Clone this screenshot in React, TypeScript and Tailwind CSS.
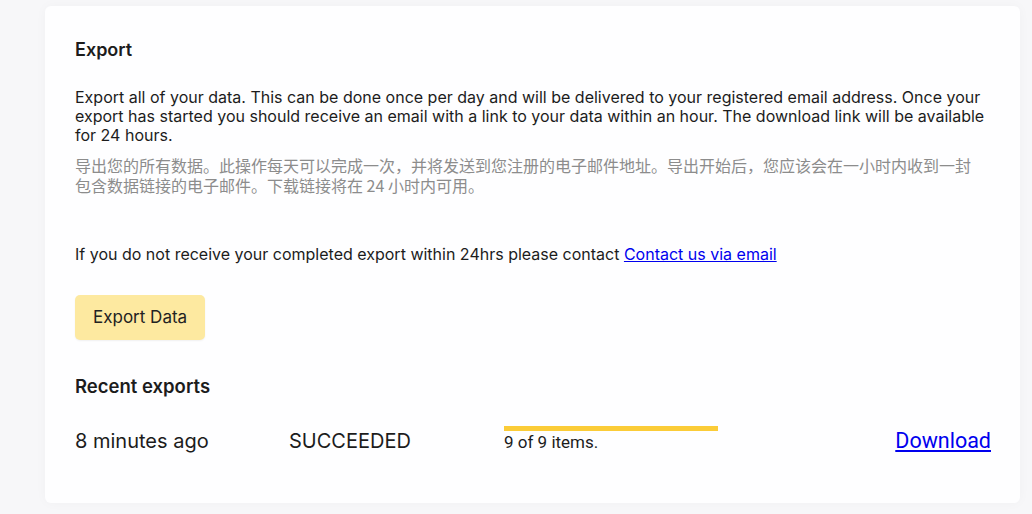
import React from 'react'

const exportsList = [
  { when: '8 minutes ago', status: 'SUCCEEDED', done: 9, total: 9 },
]

export default function App() {
  return (
    <div className="min-h-[514px] w-full bg-[#f7f7f9] pl-[45px] pr-[12px] pt-[6px] pb-[12px] font-['Inter','Noto_Sans_CJK_SC',sans-serif] text-[#1c1c1c]">
      <div className="rounded-[6px] bg-[#fefeff] pl-[30px] pr-[29px] pt-[31px] pb-[47px] shadow-[0_0_12px_rgba(0,0,0,0.03)]">
        <h2 className="text-[18px] font-semibold leading-[26px]">Export</h2>

        <p className="mt-[25px] text-[16px] leading-[19px]">
          Export all of your data. This can be done once per day and will be delivered to your registered email address. Once your export has started you should receive an email with a link to your data within an hour. The download link will be available for 24 hours.
        </p>
        <p className="mt-[10px] max-w-[905px] font-['Noto_Sans_CJK_SC',sans-serif] text-[16px] leading-[20px] text-[#8c8c8c]">
          导出您的所有数据。此操作每天可以完成一次，并将发送到您注册的电子邮件地址。导出开始后，您应该会在一小时内收到一封包含数据链接的电子邮件。下载链接将在 24 小时内可用。
        </p>

        <p className="mt-[50px] text-[16px] leading-[19px]">
          If you do not receive your completed export within 24hrs please contact{' '}
          <a href="#" className="text-[#0000ee] underline">Contact us via email</a>
        </p>

        <button className="mt-[31px] block h-[45px] rounded-[5px] bg-[#fde9a0] px-[18px] text-[17px] text-[#222] shadow-[0_1px_2px_rgba(0,0,0,0.06)]">
          Export Data
        </button>

        <h3 className="mt-[34px] text-[18.5px] font-semibold leading-[24px]">Recent exports</h3>

        {exportsList.map((e) => (
          <div key={e.when} className="mt-[28px] grid grid-cols-[214px_215px_214px_1fr] items-start">
            <span className="text-[20px] leading-[30px]">{e.when}</span>
            <span className="text-[20px] leading-[30px]">{e.status}</span>
            <div className="flex flex-col">
              <div className="h-[5px] w-full bg-[#fbcc38]">
                <div className="h-full bg-[#fbcc38]" style={{ width: `${(e.done / e.total) * 100}%` }} />
              </div>
              <span className="font-['Roboto',sans-serif] text-[17px] leading-[22px]">{e.done} of {e.total} items.</span>
            </div>
            <a href="#" className="justify-self-end font-['Roboto',sans-serif] text-[21.5px] leading-[30px] text-[#0000ee] underline">Download</a>
          </div>
        ))}
      </div>
    </div>
  )
}
